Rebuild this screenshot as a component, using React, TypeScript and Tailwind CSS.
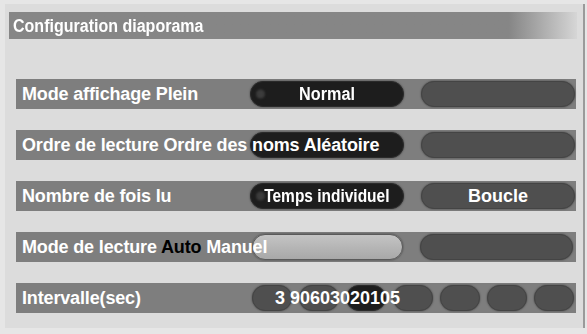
import React from "react";

const font = { fontFamily: '"Liberation Sans", Arial, sans-serif' };

function Pill({ children, selected, light, dot, className = "" }: { children?: React.ReactNode; selected?: boolean; light?: boolean; dot?: boolean; className?: string }) {
  const tone = light
    ? "bg-gradient-to-b from-[#c4c4c4] to-[#a8a8a8] border-[#5a5a5a]"
    : selected
    ? "bg-[#1d1d1d] border-[#2a2a2a]"
    : "bg-[#4f4f4f] border-[#444]";
  return (
    <div className={`relative h-[26px] rounded-full border flex items-center justify-center shadow-[0_0_2px_rgba(0,0,0,0.5)] ${tone} ${className}`}>
      {dot && <span className="absolute left-[5px] top-1/2 -translate-y-1/2 w-[9px] h-[9px] rounded-full bg-[#3c3c3c] blur-[1px]" />}
      {children}
    </div>
  );
}

function Row({ label, children }: { label: React.ReactNode; children?: React.ReactNode }) {
  return (
    <div className="relative h-[30px] w-[560px] bg-[#7e7e7e] flex items-center pl-[6px] pr-[1px]">
      <div className="relative z-10 w-[228px] shrink-0 whitespace-nowrap text-[18px] font-bold text-white leading-none tracking-[-0.15px]">
        {label}
      </div>
      {children}
    </div>
  );
}

export default function App() {
  return (
    <div className="w-[587px] h-[334px] bg-[#e6e6e6] pt-[4px] pl-[5px]" style={font}>
      <div className="w-[580px] h-[324px] bg-[#dcdcdc] border-r-2 border-[#9a9a9a] pl-[4px] pt-[8px]">
        <div className="w-[568px] h-[27px] bg-gradient-to-r from-[#868686] from-[88%] to-[#d6d6d6] flex items-center pl-[4px]">
          <span className="inline-block origin-left scale-x-[0.89] text-[18px] font-bold text-white leading-none whitespace-nowrap">
            Configuration diaporama
          </span>
        </div>

        <div className="mt-[40px] pl-[7px] flex flex-col gap-[21px]">
          <Row label="Mode affichage Plein">
            <div className="flex gap-[17px]">
              <Pill selected dot className="w-[154px]">
                <span className="inline-block scale-x-[0.9] text-[18px] font-bold text-white">Normal</span>
              </Pill>
              <Pill className="w-[154px]" />
            </div>
          </Row>

          <Row label="Ordre de lecture Ordre des noms Aléatoire">
            <div className="flex gap-[17px]">
              <Pill selected className="w-[154px]" />
              <Pill className="w-[154px]" />
            </div>
          </Row>

          <Row label="Nombre de fois lu">
            <div className="flex gap-[17px]">
              <Pill selected dot className="w-[154px]">
                <span className="inline-block scale-x-[0.86] text-[18px] font-bold text-white whitespace-nowrap">Temps individuel</span>
              </Pill>
              <Pill className="w-[154px]">
                <span className="text-[18px] font-bold text-white">Boucle</span>
              </Pill>
            </div>
          </Row>

          <Row
            label={
              <>
                Mode de lecture <span className="text-black">Auto</span> Manuel
              </>
            }
          >
            <div className="flex gap-[17px] ml-[2px]">
              <Pill light className="w-[151px]" />
              <Pill className="w-[153px]" />
            </div>
          </Row>

          <Row label="Intervalle(sec)">
            <div className="relative flex gap-[7px] ml-[2px]">
              {[0, 1, 2, 3, 4, 5, 6].map((i) => (
                <Pill key={i} selected={i === 2} className="w-[40px]" />
              ))}
              <span className="absolute left-[23px] top-1/2 -translate-y-1/2 text-[18px] font-bold text-white leading-none whitespace-nowrap">
                3 90603020105
              </span>
            </div>
          </Row>
        </div>
      </div>
    </div>
  );
}
